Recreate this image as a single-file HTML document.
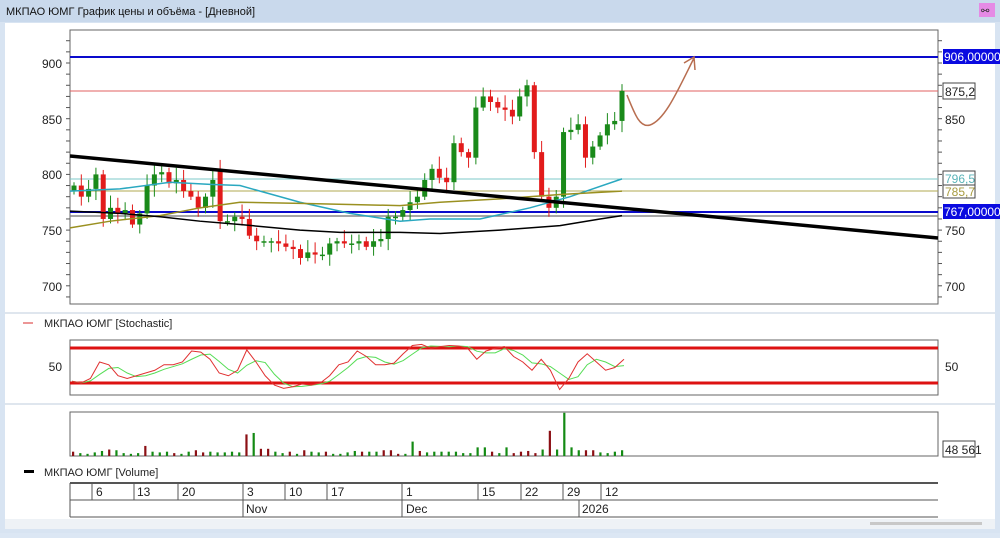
<!DOCTYPE html>
<html><head><meta charset="utf-8"><style>
body{margin:0;width:1000px;height:533px;overflow:hidden;background:#dce7f4;font-family:"Liberation Sans","DejaVu Sans",sans-serif;}
</style></head><body>
<svg id="s" width="1000" height="533" xmlns="http://www.w3.org/2000/svg" font-family="Liberation Sans, DejaVu Sans, sans-serif">
<rect x="0" y="0" width="1000" height="533" fill="#d8e4f2"/>
<rect x="0" y="0" width="1000" height="22" fill="#c9d9ec"/>
<text x="6" y="15" font-size="11" fill="#111">МКПАО ЮМГ График цены и объёма - [Дневной]</text>
<rect x="979" y="3" width="16" height="14" fill="#e58ae5"/>
<text x="981" y="14" font-size="10" fill="#333">⚯</text>
<rect x="5" y="23" width="990" height="506" fill="#fff"/>
<rect x="5" y="312" width="990" height="2" fill="#dfe6ee"/>
<rect x="5" y="403" width="990" height="2" fill="#dfe6ee"/>
<rect x="5" y="519" width="990" height="10" fill="#eef2f6"/>
<rect x="870" y="522" width="112" height="3" fill="#c8c8c8"/>
<rect x="70" y="30" width="868" height="274" fill="#fff" stroke="#666" stroke-width="1"/>
<g id="main"></g>
<!-- price axis labels -->
<g font-size="12" fill="#222">
<text x="62" y="68" text-anchor="end">900</text>
<text x="62" y="124" text-anchor="end">850</text>
<text x="62" y="179" text-anchor="end">800</text>
<text x="62" y="235" text-anchor="end">750</text>
<text x="62" y="291" text-anchor="end">700</text>
<text x="945" y="124">850</text>
<text x="945" y="235">750</text>
<text x="945" y="291">700</text>
</g>
<rect x="943" y="49" width="57" height="15" fill="#0a0ae0"/>
<text x="944" y="61" font-size="12" fill="#fff">906,00000</text>
<rect x="943" y="83" width="32" height="16" fill="#fff" stroke="#444"/>
<text x="945" y="96" font-size="12" fill="#222">875,2</text>
<rect x="943" y="171" width="32" height="15" fill="#fff" stroke="#444"/>
<text x="945" y="183" font-size="12" fill="#5ab3b8">796,5</text>
<rect x="943" y="185" width="32" height="13" fill="#fff" stroke="#444"/>
<text x="945" y="196" font-size="12" fill="#a79b40">785,7</text>
<rect x="943" y="204" width="57" height="15" fill="#0a0ae0"/>
<text x="944" y="216" font-size="12" fill="#fff">767,00000</text>
<!-- stochastic -->
<line x1="23" y1="323" x2="33" y2="323" stroke="#e05050" stroke-width="1.2"/>
<text x="44" y="327" font-size="11" fill="#222">МКПАО ЮМГ [Stochastic]</text>
<rect x="70" y="340" width="868" height="55" fill="#fff" stroke="#666"/>
<line x1="70" y1="348" x2="938" y2="348" stroke="#dd1111" stroke-width="3"/>
<line x1="70" y1="383" x2="938" y2="383" stroke="#dd1111" stroke-width="3"/>
<text x="62" y="371" font-size="12" text-anchor="end" fill="#222">50</text>
<text x="945" y="371" font-size="12" fill="#222">50</text>
<g id="stoch"></g>
<!-- volume -->
<rect x="70" y="412" width="868" height="44" fill="#fff" stroke="#666"/>
<g id="vol"></g>
<rect x="943" y="441" width="32" height="16" fill="#fff" stroke="#444"/>
<text x="945" y="454" font-size="12" fill="#222">48 561</text>
<rect x="24" y="470" width="10" height="3" fill="#000"/>
<text x="44" y="476" font-size="11" fill="#222">МКПАО ЮМГ [Volume]</text>
<!-- date axis -->
<g stroke="#555" fill="none">
<line x1="70" y1="483" x2="938" y2="483" stroke-width="2"/>
<line x1="70" y1="500" x2="938" y2="500"/>
<line x1="70" y1="517" x2="938" y2="517"/>
<line x1="70" y1="483" x2="70" y2="517"/>
<line x1="92" y1="483" x2="92" y2="500"/><line x1="134" y1="483" x2="134" y2="500"/><line x1="178" y1="483" x2="178" y2="500"/>
<line x1="243" y1="483" x2="243" y2="517"/><line x1="285" y1="483" x2="285" y2="500"/><line x1="327" y1="483" x2="327" y2="500"/>
<line x1="402" y1="483" x2="402" y2="517"/><line x1="478" y1="483" x2="478" y2="500"/><line x1="521" y1="483" x2="521" y2="500"/>
<line x1="563" y1="483" x2="563" y2="500"/><line x1="601" y1="483" x2="601" y2="500"/><line x1="579" y1="500" x2="579" y2="517"/>
</g>
<g font-size="12" fill="#222">
<text x="96" y="496">6</text><text x="137" y="496">13</text><text x="182" y="496">20</text><text x="247" y="496">3</text>
<text x="289" y="496">10</text><text x="331" y="496">17</text><text x="406" y="496">1</text><text x="482" y="496">15</text>
<text x="525" y="496">22</text><text x="567" y="496">29</text><text x="605" y="496">12</text>
<text x="246" y="513">Nov</text><text x="406" y="513">Dec</text><text x="582" y="513">2026</text>
</g>
</svg>
<script>
var NS="http://www.w3.org/2000/svg";
function el(p,t,a){var e=document.createElementNS(NS,t);for(var k in a)e.setAttribute(k,a[k]);document.getElementById(p).appendChild(e);return e;}
function Y(p){return 63+(900-p)*1.114;}
var m="main";
// ticks
for(var v=680;v<=930;v+=10){var y=Y(v);if(y>30&&y<304){el(m,"line",{x1:66,x2:70,y1:y,y2:y,stroke:"#555"});el(m,"line",{x1:938,x2:942,y1:y,y2:y,stroke:"#555"});}}
// horizontal lines
el(m,"line",{x1:70,x2:938,y1:57,y2:57,stroke:"#0a0acc","stroke-width":2});
el(m,"line",{x1:70,x2:938,y1:91,y2:91,stroke:"#e06060","stroke-width":1});
el(m,"line",{x1:70,x2:938,y1:179,y2:179,stroke:"#7cc8c8","stroke-width":1});
el(m,"line",{x1:70,x2:938,y1:191,y2:191,stroke:"#b0a850","stroke-width":1});
el(m,"line",{x1:70,x2:938,y1:212,y2:212,stroke:"#0a0acc","stroke-width":2});
el(m,"line",{x1:70,x2:938,y1:216,y2:216,stroke:"#888","stroke-width":1.5});
var C=[790,780,787,800,760,770,765,768,755,765,790,800,802,792,795,785,780,770,780,795,805,758,762,760,745,740,740,740,738,735,733,725,730,728,728,738,740,738,738,740,735,740,742,762,762,768,775,780,795,805,797,793,828,820,815,860,870,865,860,858,852,870,880,820,780,770,780,838,840,845,815,825,835,845,848,875];
var n=C.length,sp=(622-74)/(n-1),xs=[];
var o=785;
for(var i=0;i<n;i++){var x=74+i*sp;xs.push(x);var c=C[i];var op=(i==20)?805:o; if(i==20){c=758;}
 var hi=Math.max(op,c)+3+((i*7)%9),lo=Math.min(op,c)-3-((i*5)%8);
 var g=c>=op,col=g?"#1a8a1a":"#e21b1b";
 el(m,"line",{x1:x,x2:x,y1:Y(hi),y2:Y(lo),stroke:col,"stroke-width":1});
 var t=Y(Math.max(op,c)),b=Y(Math.min(op,c));if(b-t<1.5)b=t+1.5;
 el(m,"rect",{x:x-2.5,y:t,width:5,height:b-t,fill:col});
 o=c;}
function poly(pts,col,w){var d="";for(var i=0;i<pts.length;i+=2)d+=(i?"L":"M")+pts[i]+" "+Y(pts[i+1]);el(m,"path",{d:d,fill:"none",stroke:col,"stroke-width":w});}
poly([70,785,120,787,170,793,210,791,240,790,300,775,350,765,400,758,430,760,480,760,530,770,570,780,622,796],"#2aa8c0",1.5);
poly([70,752,110,758,160,763,200,770,240,775,300,774,350,773,400,772,440,775,500,778,560,782,622,785],"#9a9020",1.5);
poly([70,767,120,765,160,762,200,758,240,755,300,750,340,748,400,748,440,747,500,750,560,754,600,760,622,763],"#000",1.5);
el(m,"line",{x1:70,y1:156,x2:938,y2:238,stroke:"#000","stroke-width":3.5});
el(m,"path",{d:"M627 95 C635 115,640 128,650 125 C665 120,678 90,694 58 M684 63 L694 57 L695 70",fill:"none",stroke:"#b86e50","stroke-width":1.5});
// stochastic
function SY(v){return 395-v*0.55;}
var K=[25,22,30,60,55,35,30,35,40,45,55,55,60,80,78,65,40,35,45,82,60,35,18,12,15,20,18,22,35,55,60,80,70,55,55,58,75,90,92,85,88,90,89,85,65,80,85,88,70,60,45,65,45,10,30,60,75,60,45,50,65];
var SK=[],SD=[];
for(var i=0;i<K.length;i++){var x=72+i*(552/(K.length-1));SK.push(x+","+SY(K[i]));var dv=i>1?(K[i]+K[i-1]+K[i-2])/3:K[i];SD.push(x+","+SY(dv));}
el("stoch","polyline",{points:SD.join(" "),fill:"none",stroke:"#55dd55","stroke-width":1});
el("stoch","polyline",{points:SK.join(" "),fill:"none",stroke:"#e03030","stroke-width":1});
// volume
var V=[6,4,3,5,7,9,8,4,3,4,14,6,5,6,4,3,6,8,5,6,5,5,6,5,30,32,10,10,6,4,6,3,8,6,5,6,3,3,5,7,6,6,6,8,8,3,3,20,7,5,6,6,6,6,4,4,12,12,6,4,12,4,6,7,4,9,35,9,60,12,8,8,8,5,4,6,8];
var vs=(622-73)/(V.length-1);
var reds={0:1,5:1,10:1,14:1,17:1,18:1,24:1,26:1,27:1,30:1,32:1,35:1,40:1,43:1,44:1,45:1,48:1,58:1,61:1,62:1,63:1,64:1,66:1,68:0,71:1,72:1};
for(var i=0;i<V.length;i++){var x=73+i*vs;var h=V[i]*0.72;el("vol","rect",{x:x-1,y:456-h,width:2.2,height:h,fill:reds[i]?"#8b0f14":"#138a13"});}
</script>
</body></html>
